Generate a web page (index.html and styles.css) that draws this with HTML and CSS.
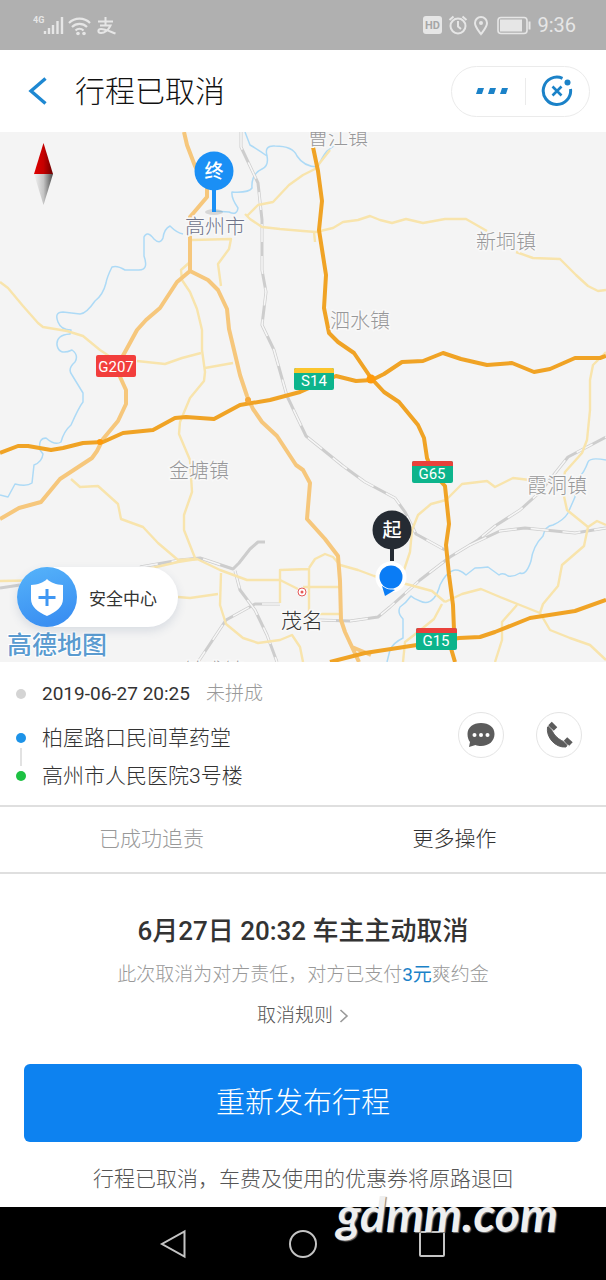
FILE: index.html
```html
<!DOCTYPE html>
<html lang="zh-CN">
<head>
    <meta charset="UTF-8">
    <meta name="viewport" content="width=device-width, initial-scale=1.0">
    <title>行程已取消</title>
    <link rel="stylesheet" href="styles.css">
</head>
<body>
    <div class="status-bar">
        <svg class="status-left" width="86" height="24" viewBox="0 0 86 24" aria-hidden="true">
            <text class="net-type" x="0" y="10">4G</text>
            <path d="M12 21v-3M16 21v-6M20 21v-9M24.500 21v-13M29 21V4" stroke="#e6e6e6" stroke-width="2.400" fill="none"/>
            <g fill="none" stroke="#e6e6e6" stroke-width="2.200">
                <path d="M36 10a15 15 0 0 1 21 0M39 14a10.500 10.500 0 0 1 15 0M42.500 17.500a6 6 0 0 1 8 0"/>
            </g>
            <circle cx="45" cy="20.500" r="1.800" fill="#e6e6e6"/>
            <circle cx="51" cy="20.500" r="1.800" fill="#e6e6e6"/>
            <path d="M65 8.500h15M72.500 4v8M67 12.500h10.500c-2 4.500-6 7.500-9.500 7.500-3.500 0-3.500-4 0-4 4 0 9 2.500 14.500 4.500" fill="none" stroke="#e6e6e6" stroke-width="2"/>
        </svg>
        <div class="status-right">
            <svg width="108" height="22" viewBox="0 0 108 22" aria-hidden="true">
                <rect x="0" y="2" width="19" height="18" rx="3" fill="#e6e6e6"/>
                <text class="hd" x="2" y="15">HD</text>
                <g fill="none" stroke="#e6e6e6" stroke-width="2">
                    <circle cx="35" cy="12" r="7.500"/>
                    <path d="M35 7v5.500l3 2.500M26.500 6l4-3.500M43.500 6l-4-3.500"/>
                    <path d="M58 20c-3-4-6-7-6-11a6 6 0 0 1 12 0c0 4-3 7-6 11z"/>
                    <rect x="75" y="3.500" width="29" height="16" rx="3" stroke-width="1.600"/>
                    <path d="M106.500 7.500v8"/>
                </g>
                <circle cx="58" cy="9" r="2" fill="#e6e6e6"/>
                <rect x="77" y="5.500" width="22" height="12" fill="#e6e6e6"/>
            </svg>
            <span class="clock">9:36</span>
        </div>
    </div>

    <header class="title-bar">
        <button type="button" class="back-btn" aria-label="返回">
            <svg width="20" height="28" viewBox="0 0 20 28"><path d="M17.500 1.500L3 14l14.500 12.500" fill="none" stroke="#1e88d2" stroke-width="3.400"/></svg>
        </button>
        <h1>行程已取消</h1>
        <div class="capsule">
            <button type="button" aria-label="更多">
                <svg width="34" height="8" viewBox="0 0 34 8" fill="#1b82c8"><path d="M3 1h6L7 7H1zM15 1h6l-2 6h-6zM27 1h6l-2 6h-6z"/></svg>
            </button>
            <button type="button" aria-label="关闭">
                <svg width="32" height="32" viewBox="0 0 32 32" fill="none" stroke="#1b82c8" stroke-width="3">
                    <path d="M21.500 3.300A13.700 13.700 0 1 0 29.500 14"/>
                    <path d="M11.500 11.500l9 9M20.500 11.500l-9 9" stroke-width="2.600"/>
                    <circle cx="26.500" cy="7.500" r="3" fill="#1b82c8" stroke="none"/>
                </svg>
            </button>
        </div>
    </header>

    <section class="map">
        <svg class="map-canvas" viewBox="0 132 606 530" role="img" aria-label="行程地图">
            <defs>
                <linearGradient id="needleRed"><stop offset="0" stop-color="#e00000"/><stop offset="0.500" stop-color="#c40000"/><stop offset="1" stop-color="#6a0000"/></linearGradient>
                <linearGradient id="needleGrey"><stop offset="0" stop-color="#f2f2f2"/><stop offset="0.500" stop-color="#c4c4c4"/><stop offset="1" stop-color="#4c4c4c"/></linearGradient>
            </defs>
            <rect x="0" y="132" width="606" height="530" fill="#f4f4f4"/>

            <!-- rivers -->
            <g class="river">
                <path d="M245 132L250 145Q257 149 267 156Q269 166 262 169Q251 174 252 188Q249 193 232 192Q231 198 238 208Q237 216 229 212L213 211"/>
                <path d="M267 156Q264 145 275 146Q293 146 297 156Q304 167 318 167Q322 157 327 151L338 143"/>
                <path d="M183 234Q177 233 170 226Q164 229 163 238Q160 245 154 239Q147 230 144 237L144 256Q149 270 139 270L125 270Q117 265 112 267Q107 277 106 283Q103 295 95 301Q86 314 80 314L63 312Q54 312 58 322Q61 330 71 330L70 334Q56 335 57 345Q59 356 72 350Q79 355 75 362Q67 369 72 375L83 393L83 402Q79 407 71 425Q64 431 61 442Q55 446 46 438Q38 438 40 450L43 454Q42 462 34 465L32 483Q27 487 15 484L8 497L0 495"/>
                <path d="M606 460Q590 457 588 462Q584 473 579 477Q576 483 575 497L568 513Q564 520 553 525Q545 526 543 536Q533 546 531 561Q526 576 520 573Q514 577 508 576Q503 572 499 575L488 567Q480 568 475 568L466 575Q458 568 452 571Q446 573 440 585Q438 593 434 598Q428 605 420 601Q414 599 411 596Q406 603 400 607Q397 613 403 619L403 638Q393 643 390 650L387 662"/>
            </g>

            <!-- railways -->
            <g class="rail">
                <path d="M241 132L241 147L258 183L262 220L262 270L266 292L262 325L274 350L287 396L306 436L343 466L365 482L395 498L405 512L416 534L445 550"/>
                <path d="M318 620L350 621L378 617L390 607L420 580L450 557L478 540L495 526L520 510L540 492L568 457L606 437"/>
                <path d="M470 545L500 531L525 528L575 533L606 528"/>
                <path d="M0 588L20 585M140 567L180 560L200 558L233 569L239 563L250 549L258 542L265 542"/>
                <path d="M235 571L240 590L255 610L267 635L277 662M280 604L255 604L226 620L198 662"/>
            </g>
            <g class="rail-gap">
                <path d="M241 132L241 147L258 183L262 220L262 270L266 292L262 325L274 350L287 396L306 436L343 466L365 482L395 498L405 512L416 534L445 550"/>
                <path d="M318 620L350 621L378 617L390 607L420 580L450 557L478 540L495 526L520 510L540 492L568 457L606 437"/>
                <path d="M470 545L500 531L525 528L575 533L606 528"/>
                <path d="M140 567L180 560L200 558L233 569M235 571L240 590L255 610L267 635L277 662M280 604L255 604L226 620L198 662"/>
            </g>

            <!-- county roads -->
            <g class="road-minor">
                <path d="M0 282L8 288L23 306L38 323L43 327L67 331L83 336L100 350L112 358M137 361L165 364L182 358L201 353"/>
                <path d="M182 280L181 270L190 262M182 280L190 292L197 309L202 330L202 350L205 372L204 381L190 398L180 422L179 434L190 460L192 492L184 515L184 530L195 558"/>
                <path d="M205 368L233 363M192 240L231 239L229 249L218 264L221 286"/>
                <path d="M245 214L250 219L262 227L280 229L303 231L316 232L333 228L343 222L358 220L370 216L380 220L392 223L406 219L423 223L445 219L466 219L487 231"/>
                <path d="M247 216L258 205L273 202L289 185L303 175L315 169L330 150M314 232L315 242"/>
                <path d="M516 252L533 258L560 259L576 275L588 286L598 291L606 290"/>
                <path d="M71 479L80 487L98 486L118 504L121 519L143 527L158 543L178 560L197 559L220 570L247 580L280 580L298 589"/>
                <path d="M0 581L60 580L130 573L178 562L197 559M178 597L190 598L218 594M221 573L220 605L226 624L243 638L258 643L280 640L292 635L300 647L303 662"/>
                <path d="M280 603L280 570L309 569L309 617M309 568L315 559L325 554L333 557L340 565L358 570L374 576L410 585L432 591L445 602M303 587L339 587M309 614L340 614"/>
                <path d="M404 570L410 552L412 530L418 515L431 504L446 500L462 484L487 481L495 487L513 478L530 480L545 483"/>
                <path d="M606 352L593 365L590 380L590 395L590 410L587 440L582 453L565 472L562 487L567 510L588 527L597 521L606 525"/>
                <path d="M588 527L584 546L562 565L558 586L543 604L540 613L550 630L570 638L590 645L606 660"/>
                <path d="M445 602L462 594L481 589L500 597L520 605L540 613M517 605L502 622L502 640L495 662M442 604L434 619L418 632L405 642L403 662"/>
            </g>

            <!-- national roads -->
            <g class="road-national">
                <path d="M184 132L187 145L195 166L207 187L207 197L190 217L190 271"/>
                <path d="M190 271L177 282L160 308L146 320L137 330L125 352L116 368L126 390L126 404L118 421L103 439L97 451L92 458L60 479L41 502L19 508L0 519"/>
                <path d="M190 271L208 280L218 290L227 309L229 329L240 375L247 396L253 409L262 422L277 436L296 465L303 470L310 483L307 519L325 539L338 556L340 581L341 620L345 632L352 647L359 662M352 647L371 655"/>
            </g>

            <!-- expressways -->
            <g class="road-express">
                <path d="M0 453L18 446L28 446L51 450L63 448L83 443L103 442L123 433L153 430L175 418L186 417L214 419L240 405L270 400L300 392L336 376L356 381L372 380L384 374L402 362L423 361L443 353L461 359L487 365L512 363L534 372L550 369L575 358L600 358L606 356"/>
                <path d="M313 147L318 171L322 201L319 230L326 275L324 308L329 333L338 342L354 353L371 378L384 392L399 402L418 425L424 438L427 458L433 473L445 486L449 524L446 545L449 575L453 605L454 630L450 645L455 662"/>
                <path d="M330 662L365 653L417 645L459 638L480 637L495 632L530 618L575 611L606 600"/>
            </g>
            <circle cx="371" cy="379" r="4.500" fill="#ff9a0a"/>
            <circle cx="248" cy="400" r="3" fill="#f6a93c"/>
            <circle cx="100" cy="442" r="3" fill="#ff9a0a"/>

            <g class="town">
                <text x="308" y="145">曹江镇</text>
                <text x="476" y="249">新垌镇</text>
                <text x="330" y="328">泗水镇</text>
                <text x="169" y="478">金塘镇</text>
                <text x="527" y="493">霞洞镇</text>
                <text x="184" y="678">镇盛镇</text>
            </g>
            <text class="county" x="185" y="234">高州市</text>
            <circle cx="302" cy="592" r="4" fill="#fff" stroke="#e55a5a"/>
            <circle cx="302" cy="592" r="1.500" fill="#e55a5a"/>
            <text class="city" x="281" y="628">茂名</text>

            <g class="shield">
                <rect x="96" y="355" width="40" height="22" rx="2" fill="#f23e3c"/>
                <text x="116" y="372">G207</text>
                <rect x="294" y="368" width="40" height="22" rx="2" fill="#0db48c"/>
                <path d="M294 373v-3a2 2 0 0 1 2-2h36a2 2 0 0 1 2 2v3z" fill="#fbc52d"/>
                <text x="314" y="386">S14</text>
                <rect x="412" y="461" width="41" height="22" rx="2" fill="#0db48c"/>
                <path d="M412 466v-3a2 2 0 0 1 2-2h37a2 2 0 0 1 2 2v3z" fill="#e9413b"/>
                <text x="432" y="479">G65</text>
                <rect x="416" y="628" width="41" height="22" rx="2" fill="#0db48c"/>
                <path d="M416 633v-3a2 2 0 0 1 2-2h37a2 2 0 0 1 2 2v3z" fill="#e9413b"/>
                <text x="436" y="646">G15</text>
            </g>

            <!-- compass -->
            <path d="M43.500 143L53 174L43.500 178L34 174z" fill="url(#needleRed)"/>
            <path d="M34 174H53L43.500 205z" fill="url(#needleGrey)"/>

            <!-- destination pin -->
            <ellipse cx="214" cy="212" rx="9" ry="3" fill="#000" opacity="0.120"/>
            <path d="M214 188v24" stroke="#1a8ff5" stroke-width="4"/>
            <circle cx="214" cy="171" r="19.500" fill="#1a8ff5"/>
            <text class="pin-text" x="214" y="178">终</text>

            <!-- start pin and current location -->
            <circle cx="391" cy="577" r="15.500" fill="#fff"/>
            <path d="M392 548v13" stroke="#252b33" stroke-width="4"/>
            <circle cx="392" cy="530" r="19.500" fill="#252b33"/>
            <text class="pin-text" x="392" y="537">起</text>
            <path d="M382 586l3 10 10-6z" fill="#0a7cf5"/>
            <circle cx="391" cy="577" r="12.500" fill="#fff"/>
            <circle cx="391" cy="577" r="11.500" fill="#0a7cf5"/>

            <text class="map-brand" x="7" y="654">高德地图</text>
        </svg>
        <button type="button" class="safety-btn">
            <svg width="60" height="60" viewBox="0 0 60 60" aria-hidden="true">
                <defs>
                    <linearGradient id="safeBg" x1="0" y1="0" x2="0.300" y2="1"><stop offset="0" stop-color="#56b4fa"/><stop offset="1" stop-color="#3b90f2"/></linearGradient>
                </defs>
                <circle cx="30" cy="30" r="30" fill="url(#safeBg)"/>
                <path d="M30 12c4 4 9 5.500 16 6v14c0 8-7 13-16 17-9-4-16-9-16-17V18c7-.5 12-2 16-6z" fill="#fff"/>
                <path d="M30 22v17M21.500 30.500h17" stroke="#3f97f3" stroke-width="3"/>
            </svg>
            <span>安全中心</span>
        </button>
    </section>

    <section class="trip">
        <ul class="trip-list">
            <li class="trip-time"><span class="dot"></span><time>2019-06-27 20:25</time><span class="trip-state">未拼成</span></li>
            <li><span class="dot dot-blue"></span>柏屋路口民间草药堂</li>
            <li><span class="dot dot-green"></span>高州市人民医院3号楼</li>
        </ul>
        <div class="contact">
            <button type="button" aria-label="发消息">
                <svg width="30" height="28" viewBox="0 0 30 28">
                    <path d="M15 2C7 2 1.500 6.500 1.500 13c0 3.500 1 6 2.500 8L3 26l6.500-2c1.500.6 3.500 1 5.500 1 8 0 13.500-5 13.500-12S23 2 15 2z" fill="#5c5c5c"/>
                    <g fill="#fff"><circle cx="8.500" cy="14" r="2"/><circle cx="15" cy="14" r="2"/><circle cx="21.500" cy="14" r="2"/></g>
                </svg>
            </button>
            <button type="button" aria-label="打电话">
                <svg width="30" height="30" viewBox="0 0 30 30" fill="none" stroke="#5c5c5c">
                    <path d="M3.500 7L6.500 5.500C8 14 14 20.500 24 23l-2 4C11 28 2 17 3.500 7z" fill="#5c5c5c"/>
                    <path d="M6 3.500l5.500 5.500M21.500 19l5.500 5" stroke-width="5" stroke-linecap="butt"/>
                    <path d="M4 5.500l6 6M19 20.500l6 6" stroke="#d0d0d0" stroke-width="0.800"/>
                </svg>
            </button>
        </div>
    </section>

    <div class="operations">
        <button type="button" disabled>已成功追责</button>
        <button type="button">更多操作</button>
    </div>

    <main class="result">
        <h2>6月27日 20:32 车主主动取消</h2>
        <p class="reason">此次取消为对方责任，对方已支付<strong>3元</strong>爽约金</p>
        <a class="rules" href="#">取消规则
            <svg width="10" height="16" viewBox="0 0 10 16" aria-hidden="true"><path d="M1.500 2l6.500 6-6.500 6" fill="none" stroke="#999" stroke-width="1.600"/></svg>
        </a>
        <button type="button" class="republish-btn">重新发布行程</button>
        <p class="refund">行程已取消，车费及使用的优惠券将原路退回</p>
    </main>

    <nav class="nav-bar">
        <button type="button" aria-label="返回">
            <svg width="30" height="30" viewBox="0 0 30 30"><path d="M25.500 2.500v25L3 15z"/></svg>
        </button>
        <button type="button" aria-label="主页">
            <svg width="30" height="30" viewBox="0 0 30 30"><circle cx="15" cy="15" r="13"/></svg>
        </button>
        <button type="button" aria-label="最近任务">
            <svg width="30" height="30" viewBox="0 0 30 30"><rect x="3" y="3" width="24" height="24" rx="1"/></svg>
        </button>
        <span class="watermark">gdmm.com</span>
    </nav>
</body>
</html>
```

FILE: styles.css
```css
* {
    box-sizing: border-box;
}
body {
    display: flex;
    flex-direction: column;
    min-height: 100vh;
    margin: 0;
    background-color: #fff;
    color: #333;
    font-family: Roboto, "Noto Sans CJK SC", sans-serif;
    font-size: 21px;
}
h1, h2, p, ul {
    margin: 0;
    padding: 0;
}
button {
    display: flex;
    align-items: center;
    justify-content: center;
    padding: 0;
    border: none;
    background: none;
    color: inherit;
    font-family: inherit;
    font-size: inherit;
    cursor: pointer;
}
svg {
    display: block;
    flex: none;
}

/* Status bar */
.status-bar {
    display: flex;
    align-items: center;
    justify-content: space-between;
    height: 50px;
    padding: 0 30px 0 33px;
    background-color: #b0b0b0;
    color: #e6e6e6;
}
.status-right {
    display: flex;
    align-items: center;
    gap: 6px;
}
.clock {
    font-size: 20px;
}
.net-type {
    fill: #e6e6e6;
    font-size: 9px;
    font-weight: 700;
}
.hd {
    fill: #a6a6a6;
    font-size: 11px;
    font-weight: 700;
}

/* Title bar */
.title-bar {
    display: flex;
    align-items: center;
    height: 82px;
    padding: 0 16px;
}
.back-btn {
    width: 43px;
    height: 48px;
}
.title-bar h1 {
    flex: 1;
    padding: 0 0 4px 16px;
    color: #111;
    font-size: 30px;
    font-weight: 300;
}
.capsule {
    display: flex;
    width: 139px;
    height: 51px;
    border: 1px solid #ebebeb;
    border-radius: 26px;
}
.capsule button {
    flex: 1;
    position: relative;
}
.capsule button:first-child {
    padding-left: 8px;
}
.capsule button + button::before {
    content: "";
    position: absolute;
    top: 11px;
    bottom: 11px;
    left: 0;
    border-left: 1px solid #ebebeb;
}

/* Map */
.map {
    position: relative;
}
.map-canvas {
    width: 100%;
    height: auto;
}
.map-canvas path {
    stroke-linejoin: round;
}
.river {
    fill: none;
    stroke: #addaf6;
    stroke-width: 1.5;
}
.rail {
    fill: none;
    stroke: #cdcdcd;
    stroke-width: 3;
}
.rail-gap {
    fill: none;
    stroke: #f6f6f6;
    stroke-width: 1.6;
    stroke-dasharray: 18 14;
}
.road-minor {
    fill: none;
    stroke: #f8e4ac;
    stroke-width: 2.4;
}
.road-national {
    fill: none;
    stroke: #f6c77c;
    stroke-width: 4;
}
.road-express {
    fill: none;
    stroke: #f0a325;
    stroke-width: 4;
}
.town text,
.county,
.city {
    font-size: 20px;
    font-weight: 300;
    paint-order: stroke;
    stroke: #f8f8f8;
    stroke-width: 3px;
}
.town text {
    fill: #98989a;
}
.county {
    fill: #70748a;
}
.city {
    fill: #333;
    font-size: 21px;
}
.shield text {
    fill: #fff;
    font-size: 15px;
    text-anchor: middle;
}
.pin-text {
    fill: #fff;
    font-size: 19px;
    font-weight: 500;
    text-anchor: middle;
}
.map-brand {
    fill: #5a9bd0;
    font-size: 25px;
    font-weight: 500;
    paint-order: stroke;
    stroke: #fff;
    stroke-width: 2px;
}
.safety-btn {
    position: absolute;
    bottom: 35px;
    left: 17px;
    gap: 12px;
    padding-right: 21px;
    border-radius: 30px;
    background-color: #fff;
    box-shadow: 0 4px 10px rgba(60, 90, 130, 0.15);
    font-size: 17px;
}

/* Trip */
.trip {
    display: flex;
    align-items: center;
    justify-content: space-between;
    padding: 13px 24px 10px 16px;
    border-bottom: 2px solid #dfdfdf;
}
.trip-list {
    list-style: none;
}
.trip-list li {
    display: flex;
    align-items: center;
    line-height: 38px;
    font-weight: 300;
}
.trip-list .trip-time {
    margin-bottom: 6px;
    font-size: 19px;
}
.trip-time time {
    font-weight: 400;
}
.trip-state {
    margin-left: 16px;
    color: #999;
}
.dot {
    width: 10px;
    height: 10px;
    margin-right: 16px;
    border-radius: 50%;
    background-color: #d4d4d4;
}
.dot-blue {
    position: relative;
    background-color: #1d93e8;
}
.dot-blue::after {
    content: "";
    position: absolute;
    top: 15px;
    left: 4px;
    height: 18px;
    border-left: 2px solid #e2e2e2;
}
.dot-green {
    background-color: #1dc143;
}
.contact {
    display: flex;
    gap: 32px;
}
.contact button {
    width: 46px;
    height: 46px;
    border: 1px solid #e4e4e4;
    border-radius: 50%;
}

/* Operations */
.operations {
    display: flex;
    border-bottom: 2px solid #dfdfdf;
}
.operations button {
    flex: 1;
    height: 65px;
    padding-bottom: 6px;
    font-weight: 300;
}
.operations button:disabled {
    color: #999;
}

/* Result */
.result {
    display: flex;
    flex: 1;
    flex-direction: column;
    align-items: center;
    padding: 40px 24px 12px;
}
.result h2 {
    line-height: 34px;
    font-size: 26px;
    font-weight: 500;
}
.reason {
    margin-top: 13px;
    line-height: 28px;
    color: #999;
    font-size: 19px;
    font-weight: 300;
}
.reason strong {
    color: #1b82c8;
    font-weight: 400;
}
.rules {
    display: flex;
    align-items: center;
    gap: 6px;
    margin-top: 13px;
    line-height: 28px;
    color: #555;
    font-size: 19px;
    font-weight: 300;
    text-decoration: none;
}
.republish-btn {
    width: 100%;
    height: 78px;
    margin-top: 34px;
    padding-bottom: 6px;
    border-radius: 6px;
    background-color: #0d82f0;
    color: #fff;
    font-size: 29px;
    font-weight: 300;
}
.refund {
    margin-top: 22px;
    line-height: 30px;
    color: #555;
    font-weight: 300;
}

/* Navigation bar */
.nav-bar {
    position: relative;
    display: flex;
    justify-content: center;
    height: 73px;
    background-color: #000;
}
.nav-bar button {
    width: 129px;
}
.nav-bar svg {
    fill: none;
    stroke: #c4c4c4;
    stroke-width: 2;
}
.watermark {
    position: absolute;
    right: 48px;
    bottom: 38px;
    line-height: 56px;
    color: #efefef;
    font-family: Lato, sans-serif;
    font-size: 48px;
    font-style: italic;
    font-weight: 700;
    text-shadow: 1px 1px 1px #777;
}
```
